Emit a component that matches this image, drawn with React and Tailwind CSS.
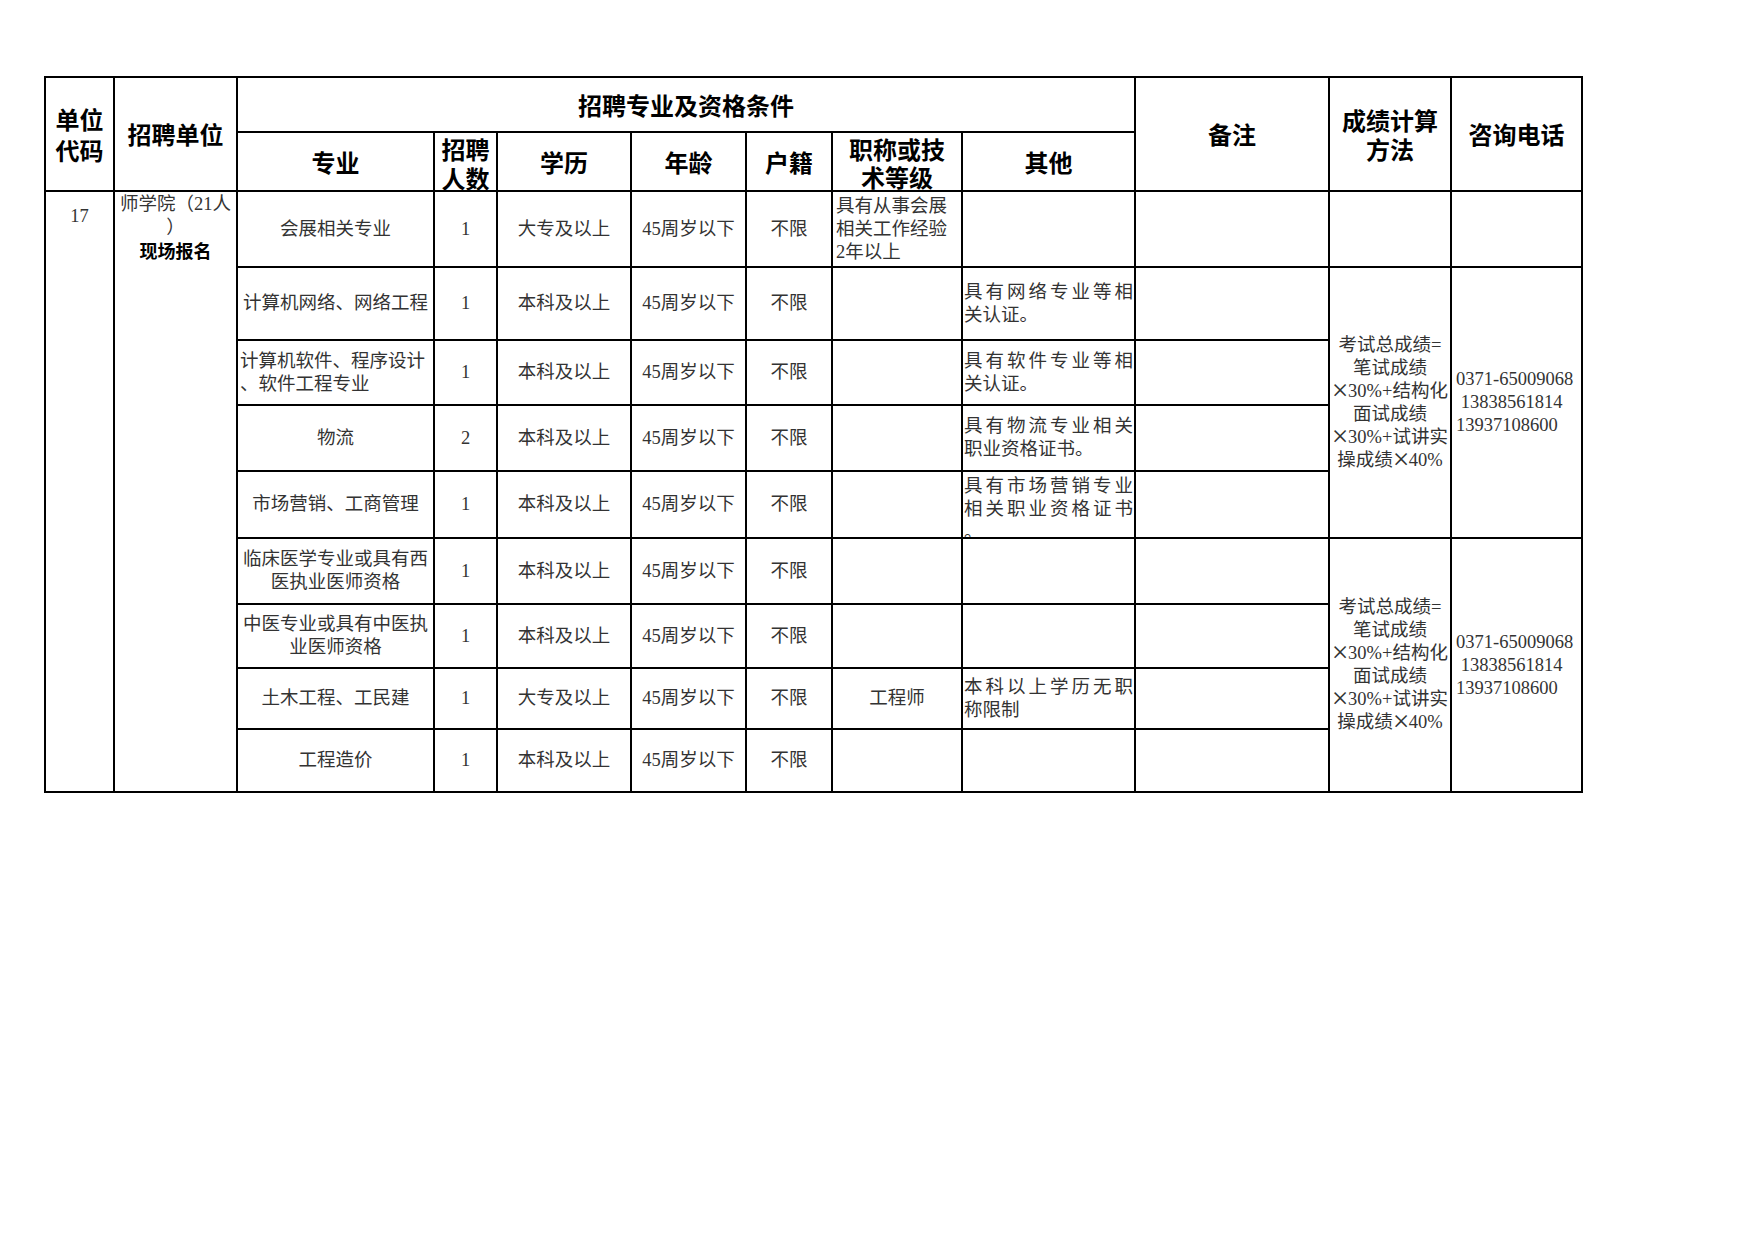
import React from "react";

const serif = "font-['Liberation_Serif','Noto_Sans_CJK_SC',serif]";
const sans = "font-['Noto_Sans_CJK_SC',sans-serif]";

const rowStart = [
    "row-start-3",
    "row-start-4",
    "row-start-5",
    "row-start-6",
    "row-start-7",
    "row-start-8",
    "row-start-9",
    "row-start-10",
    "row-start-11",
];

// justified line, last line too (Excel distributed text)
const J = ({ children }) => (
    <div className="text-justify [text-align-last:justify]">{children}</div>
);

// wide multiply sign like the SimSun one
const X = () => <span className="inline-block w-[16px] text-center scale-[1.6] font-light">×</span>;

const rows = [
    {
        major: "会展相关专业",
        n: "1",
        edu: "大专及以上",
        title: (
            <div className="text-left pl-[3px]">
                具有从事会展
                <br />
                相关工作经验
                <br />
                2年以上
            </div>
        ),
        titleLeft: true,
    },
    {
        major: "计算机网络、网络工程",
        n: "1",
        edu: "本科及以上",
        other: (
            <>
                <J>具有网络专业等相</J>
                <div>关认证。</div>
            </>
        ),
    },
    {
        major: (
            <div className="text-left w-full pl-[2px]">
                计算机软件、程序设计
                <br />
                、软件工程专业
            </div>
        ),
        n: "1",
        edu: "本科及以上",
        other: (
            <>
                <J>具有软件专业等相</J>
                <div>关认证。</div>
            </>
        ),
    },
    {
        major: "物流",
        n: "2",
        edu: "本科及以上",
        other: (
            <>
                <J>具有物流专业相关</J>
                <div>职业资格证书。</div>
            </>
        ),
    },
    {
        major: "市场营销、工商管理",
        n: "1",
        edu: "本科及以上",
        other: (
            <>
                <J>具有市场营销专业</J>
                <J>相关职业资格证书</J>
                <div>。</div>
            </>
        ),
        otherTop: true,
    },
    {
        major: (
            <>
                临床医学专业或具有西
                <br />
                医执业医师资格
            </>
        ),
        n: "1",
        edu: "本科及以上",
    },
    {
        major: (
            <>
                中医专业或具有中医执
                <br />
                业医师资格
            </>
        ),
        n: "1",
        edu: "本科及以上",
    },
    {
        major: "土木工程、工民建",
        n: "1",
        edu: "大专及以上",
        title: "工程师",
        other: (
            <>
                <J>本科以上学历无职</J>
                <div>称限制</div>
            </>
        ),
    },
    {
        major: "工程造价",
        n: "1",
        edu: "本科及以上",
    },
];

const cell = "bg-white flex items-center justify-center text-center overflow-hidden";
const head = `${cell} ${sans} font-bold text-[24px] text-black`;
const data = `${cell} ${serif} text-[18.5px] leading-[23px] text-[#333]`;

const Score = () => (
    <div className="whitespace-nowrap">
        考试总成绩=
        <br />
        笔试成绩
        <br />
        <X />
        30%+结构化
        <br />
        面试成绩
        <br />
        <X />
        30%+试讲实
        <br />
        操成绩
        <X />
        40%
    </div>
);

const Phone = () => (
    <div className="text-left w-full pl-[4px] whitespace-nowrap">
        0371-65009068
        <br />
        {"\u00a013838561814"}
        <br />
        13937108600
    </div>
);

const App = () => {
    return (
        <div className="min-h-screen bg-white pt-[76px] pl-[44px]">
            <div className="grid w-fit grid-cols-[67px_121px_195px_61px_132px_113px_84px_128px_171px_192px_120px_129px] grid-rows-[53px_57px_74px_71px_63px_64px_65px_64px_62px_59px_61px] gap-[2px] p-[2px] bg-black">
                {/* header */}
                <div className={`${head} col-start-1 row-start-1 row-span-2 leading-[31px]`}>
                    <div>
                        单位
                        <br />
                        代码
                    </div>
                </div>
                <div className={`${head} col-start-2 row-start-1 row-span-2`}>招聘单位</div>
                <div className={`${head} col-start-3 col-span-7 row-start-1`}>招聘专业及资格条件</div>
                <div className={`${head} col-start-10 row-start-1 row-span-2`}>备注</div>
                <div className={`${head} col-start-11 row-start-1 row-span-2 leading-[29px]`}>
                    <div>
                        成绩计算
                        <br />
                        方法
                    </div>
                </div>
                <div className={`${head} col-start-12 row-start-1 row-span-2`}>咨询电话</div>

                <div className={`${head} col-start-3 row-start-2`}>专业</div>
                <div className={`${head} col-start-4 row-start-2 !items-start pt-[1px] leading-[29px]`}>
                    <div>
                        招聘
                        <br />
                        人数
                    </div>
                </div>
                <div className={`${head} col-start-5 row-start-2`}>学历</div>
                <div className={`${head} col-start-6 row-start-2`}>年龄</div>
                <div className={`${head} col-start-7 row-start-2`}>户籍</div>
                <div className={`${head} col-start-8 row-start-2 !items-start pt-[2px] leading-[28px]`}>
                    <div>
                        职称或技
                        <br />
                        术等级
                    </div>
                </div>
                <div className={`${head} col-start-9 row-start-2`}>其他</div>

                {/* merged left columns */}
                <div className={`${data} col-start-1 row-start-3 row-span-9 !items-start pt-[13px] text-[17px]`}>
                    17
                </div>
                <div className={`${data} col-start-2 row-start-3 row-span-9 !items-start pt-[1px]`}>
                    <div>
                        师学院（21人
                        <br />）
                        <div className={`${sans} font-bold text-[18px] text-black`}>现场报名</div>
                    </div>
                </div>

                {rows.map((r, i) => (
                    <React.Fragment key={i}>
                        <div className={`${data} col-start-3 ${rowStart[i]}`}>{r.major}</div>
                        <div className={`${data} col-start-4 ${rowStart[i]}`}>{r.n}</div>
                        <div className={`${data} col-start-5 ${rowStart[i]}`}>{r.edu}</div>
                        <div className={`${data} col-start-6 ${rowStart[i]}`}>45周岁以下</div>
                        <div className={`${data} col-start-7 ${rowStart[i]}`}>不限</div>
                        <div className={`${data} col-start-8 ${rowStart[i]} ${r.titleLeft ? "!justify-start" : ""}`}>
                            {r.title}
                        </div>
                        <div
                            className={`${data} col-start-9 ${rowStart[i]} !text-left ${
                                r.otherTop ? "!items-start pt-[3px]" : ""
                            }`}
                        >
                            <div className="w-full px-[1px]">{r.other}</div>
                        </div>
                        <div className={`${data} col-start-10 ${rowStart[i]}`}></div>
                    </React.Fragment>
                ))}

                {/* score & phone */}
                <div className={`${data} col-start-11 row-start-3`}></div>
                <div className={`${data} col-start-12 row-start-3`}></div>
                <div className={`${data} col-start-11 row-start-4 row-span-4`}>
                    <Score />
                </div>
                <div className={`${data} col-start-12 row-start-4 row-span-4`}>
                    <Phone />
                </div>
                <div className={`${data} col-start-11 row-start-8 row-span-4`}>
                    <Score />
                </div>
                <div className={`${data} col-start-12 row-start-8 row-span-4`}>
                    <Phone />
                </div>
            </div>
        </div>
    );
};

export default App;
